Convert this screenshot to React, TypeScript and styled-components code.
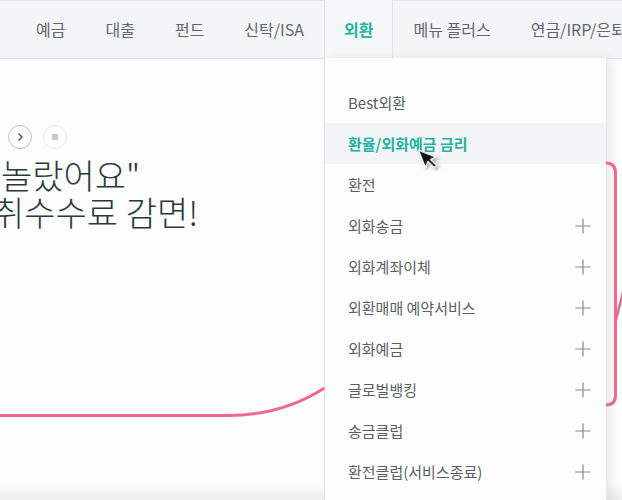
import React from 'react'
import styled, { createGlobalStyle } from 'styled-components'

const GlobalStyle = createGlobalStyle`
    body {
        margin: 0;
        background: #fdfdfd;
        font-family: 'Noto Sans CJK KR', 'Noto Sans', sans-serif;
    }
`

const navItems = ['예금', '대출', '펀드', '신탁/ISA', '외환', '메뉴 플러스', '연금/IRP/은퇴']

const menuItems = [
    { label: 'Best외환', more: false },
    { label: '환율/외화예금 금리', more: false, active: true },
    { label: '환전', more: false },
    { label: '외화송금', more: true },
    { label: '외화계좌이체', more: true },
    { label: '외환매매 예약서비스', more: true },
    { label: '외화예금', more: true },
    { label: '글로벌뱅킹', more: true },
    { label: '송금클럽', more: true },
    { label: '환전클럽(서비스종료)', more: true },
]

const PlusIcon = () => (
    <svg width="16" height="16" viewBox="0 0 16 16">
        <path d="M8 0.5V15.5M0.5 8H15.5" stroke="#858b8f" strokeWidth="1.2" fill="none" />
    </svg>
)

const NextIcon = () => (
    <svg width="8" height="10" viewBox="0 0 8 10">
        <path d="M2.5 1.5L6 5L2.5 8.5" stroke="#4d5560" strokeWidth="1.4" fill="none" />
    </svg>
)

export default function App() {
    return (
        <>
            <GlobalStyle />
            <Page>
                <NavBar>
                    {navItems.map((item) => (
                        <NavItem key={item} $active={item === '외환'}>
                            {item}
                        </NavItem>
                    ))}
                </NavBar>
                <Hero>
                    <Controls>
                        <CircleButton $light={false}>
                            <NextIcon />
                        </CircleButton>
                        <CircleButton $light>
                            <StopSquare />
                        </CircleButton>
                    </Controls>
                    <Headline>
                        <HeadLine $indent={1}>놀랐어요"</HeadLine>
                        <HeadLine $indent={-7}>취수수료 감면!</HeadLine>
                    </Headline>
                </Hero>
                <Dropdown>
                    {menuItems.map((m) => (
                        <MenuRow key={m.label} $active={!!m.active}>
                            <span>{m.label}</span>
                            {m.more && <PlusIcon />}
                        </MenuRow>
                    ))}
                </Dropdown>
                {/* decorative pink outline, only the parts outside the menu */}
                <Deco width="622" height="442" viewBox="0 58 622 442">
                    <path
                        d="M-5 415.5H228C264 415.5 298 405 324.5 388"
                        stroke="#f0698d"
                        strokeWidth="3"
                        fill="none"
                    />
                    <path
                        d="M606 163Q615.5 163 615.5 173V395Q615.5 405 606 405"
                        stroke="#f0698d"
                        strokeWidth="3"
                        fill="none"
                    />
                    <path d="M626 280L616 320" stroke="#f0698d" strokeWidth="2.5" fill="none" />
                </Deco>
                <Cursor width="19" height="26" viewBox="0 0 16 22">
                    <path
                        d="M1 1L1 17L5 13.2L8 20L10.6 18.9L7.7 12.3L13 12.3Z"
                        fill="#111"
                        stroke="#fff"
                        strokeWidth="1.2"
                        strokeLinejoin="round"
                    />
                </Cursor>
            </Page>
        </>
    )
}

const Page = styled.div`
    position: relative;
    width: 622px;
    height: 500px;
    overflow: hidden;
    display: flex;
    flex-direction: column;
`

const NavBar = styled.nav`
    display: flex;
    align-items: stretch;
    height: 57px;
    padding-left: 16px;
    background: #f4f5f7;
    border-top: 1px solid #e6e8eb;
    border-bottom: 1px solid #dfe2e5;
    white-space: nowrap;
`

const NavItem = styled.div<{ $active: boolean }>`
    display: flex;
    align-items: center;
    padding: 0 19px;
    font-size: 16px;
    color: ${(p) => (p.$active ? '#1fb3a0' : '#62676c')};
    font-weight: ${(p) => (p.$active ? 700 : 400)};
    border-left: 1px solid ${(p) => (p.$active ? '#dfe2e5' : 'transparent')};
    border-right: 1px solid ${(p) => (p.$active ? '#dfe2e5' : 'transparent')};
    background: ${(p) => (p.$active ? '#f6f7f8' : 'transparent')};
    margin: -1px 0 0;
`

const Hero = styled.section`
    flex: 1;
    padding-top: 66px;
    background: linear-gradient(to bottom, #fdfdfd calc(100% - 16px), #ececec 100%);
`

const Deco = styled.svg`
    position: absolute;
    left: 0;
    top: 58px;
    pointer-events: none;
`

const Controls = styled.div`
    display: flex;
    gap: 11px;
    padding-left: 8px;
`

const CircleButton = styled.div<{ $light: boolean }>`
    width: 22px;
    height: 22px;
    border-radius: 50%;
    border: 1px solid ${(p) => (p.$light ? '#e2e5e8' : '#b9c0c8')};
    background: #fff;
    display: flex;
    align-items: center;
    justify-content: center;
`

const StopSquare = styled.span`
    width: 6px;
    height: 6px;
    background: #c7c9cc;
`

const Headline = styled.h2`
    margin: 7px 0 0;
    font-size: 34px;
    font-weight: 300;
    line-height: 37px;
    color: #293b39;
`

const HeadLine = styled.div<{ $indent: number }>`
    margin-left: ${(p) => p.$indent}px;
    white-space: nowrap;
`

const Dropdown = styled.ul`
    position: absolute;
    left: 324px;
    top: 58px;
    width: 281px;
    height: 460px;
    margin: 0;
    padding: 24px 0 0;
    list-style: none;
    background: #fdfdfd;
    border-left: 1px solid #dfe2e5;
    border-right: 1px solid #e4e6e8;
    box-shadow: 5px 0 10px rgba(0, 0, 0, 0.07);
`

const MenuRow = styled.li<{ $active: boolean }>`
    height: 41px;
    display: flex;
    align-items: center;
    justify-content: space-between;
    padding: 0 15px 0 23px;
    font-size: 15px;
    color: ${(p) => (p.$active ? '#1fb3a0' : '#5a5f65')};
    font-weight: ${(p) => (p.$active ? 700 : 400)};
    background: ${(p) => (p.$active ? '#f3f4f6' : 'transparent')};
`

const Cursor = styled.svg`
    position: absolute;
    left: 417px;
    top: 149px;
    transform: rotate(-22deg);
    transform-origin: 1px 1px;
    filter: drop-shadow(1px 2px 1.5px rgba(0, 0, 0, 0.35));
`
